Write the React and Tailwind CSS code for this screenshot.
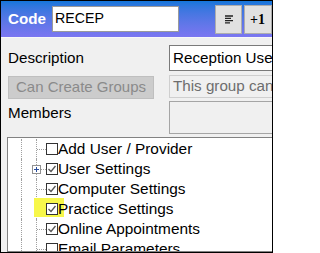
import React from 'react'

const font = { fontFamily: '"Liberation Sans", Arial, sans-serif' }

function Box({ checked }) {
    return (
        <svg width="12" height="12" viewBox="0 0 12 12" className="shrink-0">
            <rect x="0.5" y="0.5" width="11" height="11" fill="#ffffff" stroke="#333333" />
            {checked && (
                <path d="M2.5 6 L5 8.5 L9.5 3" fill="none" stroke="#555555" strokeWidth="1.3" />
            )}
        </svg>
    )
}

function Row({ label, checked, plus, mark }) {
    return (
        <div className="flex h-[20px] items-center">
            <div className="w-[15px] h-full border-l border-dotted border-[#a0a0a0]" />
            <div className="relative w-[10px] h-full border-l border-dotted border-[#a0a0a0] flex items-center">
                <div className="w-full border-t border-dotted border-[#a0a0a0]" />
                {plus && (
                    <div className="absolute left-[-5px] top-[6px] w-[9px] h-[9px] border border-[#919191] bg-white flex items-center justify-center">
                        <svg width="7" height="7" viewBox="0 0 7 7">
                            <path d="M1 3.5 H6 M3.5 1 V6" stroke="#2a4d9c" strokeWidth="1" />
                        </svg>
                    </div>
                )}
            </div>
            <div className="relative flex items-center">
                {mark && <div className="absolute left-[-12px] top-[-5px] w-[30px] h-[19px] bg-[#f7f74a]" />}
                <div className="relative">
                    <Box checked={checked} />
                </div>
            </div>
            <span className="relative text-[15.4px] leading-[20px] text-black whitespace-nowrap">{label}</span>
        </div>
    )
}

export default function App() {
    return (
        <div className="w-[273px] h-[253px] border border-black overflow-hidden bg-[#f0f0f0] flex flex-col" style={font}>
            <div className="h-[37px] shrink-0 bg-gradient-to-b from-[#1276da] to-[#7b76f1] flex items-center border-b border-[#f8f8f8]">
                <span className="ml-[7px] text-white font-bold text-[15.2px]">Code</span>
                <div className="ml-[6px] w-[134px] h-[26px] bg-white border border-[#9a9a9a] flex items-center pl-[2px] text-[14.2px] text-black">RECEP</div>
                <div className="ml-[36px] w-[28px] h-[29px] bg-[#e1e1e1] border border-[#adadad] flex items-center justify-center">
                    <svg width="10" height="9" viewBox="0 0 10 9">
                        <path d="M1 1 H9 M1 3.3 H7 M1 5.6 H9 M1 7.9 H6" stroke="#222222" strokeWidth="1.3" />
                    </svg>
                </div>
                <div className="ml-[2px] w-[28px] h-[29px] shrink-0 bg-[#e1e1e1] border border-[#adadad] flex items-center pl-[5px] font-bold text-[14px] text-black" style={{ fontFamily: '"Liberation Serif", serif' }}>+1</div>
            </div>

            <div className="mt-[7px] flex h-[26px] shrink-0">
                <div className="w-[161px] ml-[7px] shrink-0 text-[15.2px] leading-[26px] text-black">Description</div>
                <div className="w-[130px] shrink-0 h-[26px] bg-white border border-[#7a7a7a] flex items-center pl-[3px] text-[15.2px] text-black whitespace-nowrap">Reception User</div>
            </div>

            <div className="mt-[4px] flex h-[24px] shrink-0">
                <div className="w-[161px] ml-[7px] shrink-0 pt-[1px]">
                    <div className="w-[146px] h-[23px] bg-[#cccccc] border border-[#bfbfbf] flex items-center justify-center text-[15px] text-[#8a8a8a] whitespace-nowrap">Can Create Groups</div>
                </div>
                <div className="w-[130px] shrink-0 h-[23px] border border-[#cfcfcf] flex items-center pl-[3px] text-[15.2px] text-[#6d6d6d] whitespace-nowrap">This group cannot</div>
            </div>

            <div className="mt-[2px] flex h-[33px] shrink-0">
                <div className="w-[161px] ml-[7px] shrink-0 text-[15.2px] leading-[20px] pt-[2px] text-black">Members</div>
                <div className="w-[130px] shrink-0 h-[33px] border border-[#a5a5a5]" />
            </div>

            <div className="mt-[3px] ml-[6px] w-[300px] flex-1 bg-white border border-[#828282] pl-[13px] pt-[1px] overflow-hidden">
                <Row label="Add User / Provider" />
                <Row label="User Settings" checked plus />
                <Row label="Computer Settings" checked />
                <Row label="Practice Settings" checked mark />
                <Row label="Online Appointments" checked />
                <Row label="Email Parameters" />
            </div>
        </div>
    )
}
